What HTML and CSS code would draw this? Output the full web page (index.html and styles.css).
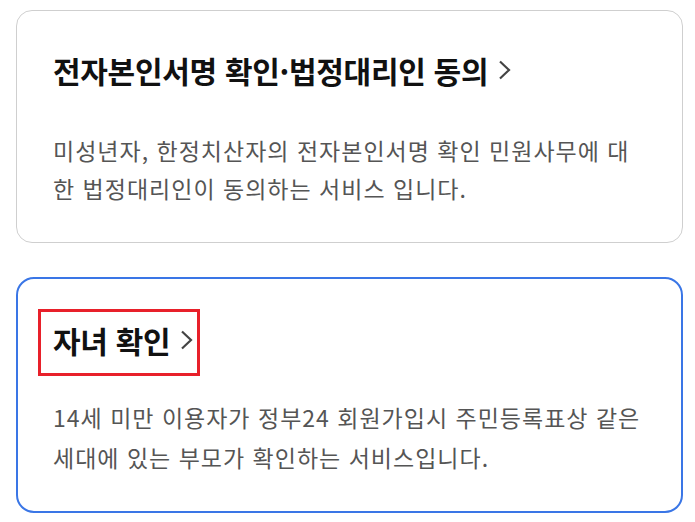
FILE: index.html
```html
<!DOCTYPE html>
<html lang="ko">
  <head>
    <meta charset="UTF-8" />
    <meta name="viewport" content="width=device-width, initial-scale=1.0" />
    <title>서비스 안내</title>
    <link rel="stylesheet" href="styles.css">
  </head>
  <body>
    <ul class="service-list">
      <li class="service-card">
        <a class="service-title" href="#">
          전자본인서명 확인·법정대리인 동의
          <svg class="chevron" viewBox="0 0 13 20" width="13" height="20"><path d="M2 1.5 L11 10 L2 18.5" /></svg>
        </a>
        <p class="service-desc">미성년자, 한정치산자의 전자본인서명 확인 민원사무에 대한 법정대리인이 동의하는 서비스 입니다.</p>
      </li>
      <li class="service-card active">
        <a class="service-title marked" href="#">
          자녀 확인
          <svg class="chevron" viewBox="0 0 13 20" width="13" height="20"><path d="M2 1.5 L11 10 L2 18.5" /></svg>
        </a>
        <p class="service-desc">14세 미만 이용자가 정부24 회원가입시 주민등록표상 같은 세대에 있는 부모가 확인하는 서비스입니다.</p>
      </li>
    </ul>
  </body>
</html>
```

FILE: styles.css
```css
body {
  margin: 0;
  background: #fff;
  font-family: "Noto Sans CJK KR", "Noto Sans", sans-serif;
}

.service-list {
  list-style: none;
  margin: 0;
  padding: 10px 12px 0 16px;
  display: flex;
  flex-direction: column;
  gap: 34px;
}

.service-card {
  border: 1px solid #cfcfcf;
  border-radius: 16px;
  padding: 39px 32px 35px 36px;
}

.service-card.active {
  border: 2px solid #3a76e6;
  border-radius: 18px;
  padding: 39px 31px 34px 35px;
}

.service-title {
  display: inline-flex;
  align-items: center;
  gap: 10px;
  font-size: 30px;
  font-weight: 700;
  line-height: 40px;
  letter-spacing: -0.3px;
  color: #111;
  text-decoration: none;
}

.service-title .chevron {
  fill: none;
  stroke: #444;
  stroke-width: 2.2;
}

.service-title.marked {
  border: 3px solid #e8202a;
  padding: 8px 4px 13px 12px;
  margin: -9px 0 -16px -15px;
}

.service-desc {
  margin: 41px 0 0;
  font-size: 23px;
  line-height: 38px;
  color: #555;
  word-break: break-all;
  letter-spacing: 1px;
}

.active .service-desc {
  margin-top: 37px;
  line-height: 40px;
}
```
